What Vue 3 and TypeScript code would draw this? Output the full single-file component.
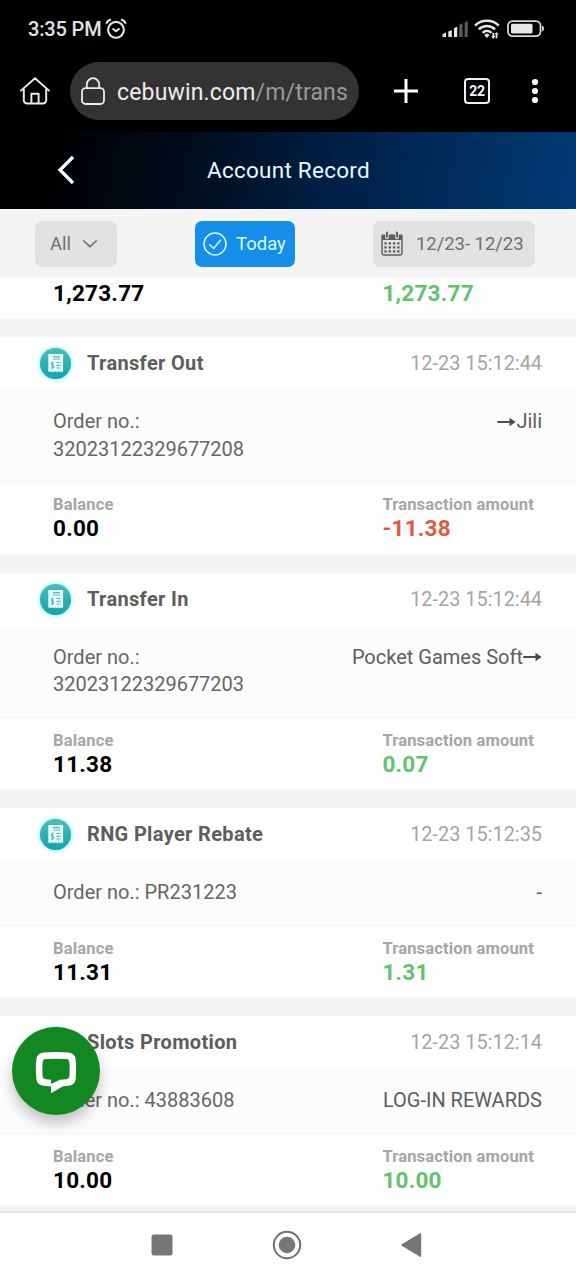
<script setup lang="ts">
interface AccountRecord {
  title: string
  time: string
  order: string[]
  note: string
  arrow?: 'before' | 'after'
  balance: string
  amount: string
}

const records: AccountRecord[] = [
  { title: 'Transfer Out', time: '12-23 15:12:44', order: ['Order no.:', '32023122329677208'], note: 'Jili', arrow: 'before', balance: '0.00', amount: '-11.38' },
  { title: 'Transfer In', time: '12-23 15:12:44', order: ['Order no.:', '32023122329677203'], note: 'Pocket Games Soft', arrow: 'after', balance: '11.38', amount: '0.07' },
  { title: 'RNG Player Rebate', time: '12-23 15:12:35', order: ['Order no.: PR231223'], note: '-', balance: '11.31', amount: '1.31' },
  { title: 'Slots Promotion', time: '12-23 15:12:14', order: ['Order no.: 43883608'], note: 'LOG-IN REWARDS', balance: '10.00', amount: '10.00' },
]
const dotColumns = [5.5, 9.8, 14.1, 18.4]
const dotRows = [11.5, 15.5, 19.5]
</script>

<template>
  <div class="screen">
    <div class="status">
      <span class="clock">3:35 PM</span>
      <svg class="alarm" width="22" height="22" viewBox="0 0 22 22" fill="none" stroke="#e2e2e2" stroke-width="2.1">
        <circle cx="11" cy="11.8" r="7.9" />
        <path d="M7.6 10.5 11 13.2l3.6-2.7" />
        <path d="M1.2 5.6C2 3.6 3.8 2.1 6 1.6M20.8 5.6C20 3.6 18.2 2.1 16 1.6" />
      </svg>
      <span class="spacer"></span>
      <svg class="signal" width="27" height="18" viewBox="0 0 27 18">
        <path d="M.5 14.2 4 12.5V17H.5zM6.3 11.5l3.5-1.6V17H6.3zM12 8.2l3.2-1.6V17H12z" fill="#e6e6e6" />
        <path d="m17.3 4.8 3.2-1.6V17h-3.2zM22.7 2.5l3-1.5v16h-3z" fill="#5c5c5c" />
      </svg>
      <svg class="wifi" width="26" height="20" viewBox="0 0 26 20" fill="none" stroke="#e6e6e6" stroke-width="2.4">
        <path d="M1 6.6C7.5.2 18.3.2 24.8 6.6M4.8 10.3c4.7-4.5 11.6-4.5 16.3 0M8.5 13.8c2.6-2.4 6.4-2.4 9 0" />
        <path d="m10.2 16 2.7-1.8 2.7 1.8-2.7 3z" fill="#e6e6e6" stroke="none" />
        <path d="M19.3 13.8v5M22.5 14.2v5" stroke-width="1.8" />
        <path d="m17.6 17 1.7 2.5 1.5-2.5M21 15.5l1.5-2 1.7 2" stroke-width="1" />
      </svg>
      <svg class="battery" width="38" height="18" viewBox="0 0 38 18">
        <rect x="1" y="1.1" width="32.5" height="15" rx="4.6" fill="none" stroke="#d8d8d8" stroke-width="1.8" />
        <rect x="4" y="3.8" width="21.5" height="9.7" rx="1.5" fill="#e6e6e6" />
        <path d="M35 5.8c2.6 0 2.6 5.6 0 5.6z" fill="#d8d8d8" />
      </svg>
    </div>

    <div class="browser">
      <svg class="home" width="32" height="30" viewBox="0 0 32 30" fill="none" stroke="#ededed" stroke-width="1.9" stroke-linecap="round" stroke-linejoin="round">
        <path d="M2 14.6 16 2.2l14 12.4M4.8 13v11.2a3.3 3.3 0 0 0 3.3 3.3h15.8a3.3 3.3 0 0 0 3.3-3.3V13M12.4 27.3v-9.6h7.2v9.6" />
      </svg>
      <div class="address">
        <svg width="26" height="30" viewBox="0 0 26 30" fill="none" stroke="#ededed" stroke-width="1.8">
          <rect x="2" y="12.2" width="22" height="15.8" rx="3.6" />
          <path d="M6.8 12V8.4a6.2 6.2 0 0 1 12.4 0V12" />
        </svg>
        <span class="url">cebuwin.com<span class="path">/m/trans</span></span>
      </div>
      <svg class="plus" width="26" height="26" viewBox="0 0 26 26" stroke="#fff" stroke-width="3">
        <path d="M1 13h24M13 1v24" />
      </svg>
      <div class="tabs">22</div>
      <svg class="more" width="8" height="26" viewBox="0 0 8 26" fill="#f4f4f4">
        <circle cx="4" cy="4" r="3.1" /><circle cx="4" cy="13" r="3.1" /><circle cx="4" cy="22" r="3.1" />
      </svg>
    </div>

    <header class="title-bar">
      <svg class="back" width="20" height="32" viewBox="0 0 20 32" fill="none" stroke="#fff" stroke-width="3.3">
        <path d="M17 3 4 16l13 13" />
      </svg>
      <h1>Account Record</h1>
    </header>

    <div class="filters">
      <button class="chip all">
        <span>All</span>
        <svg width="16" height="10" viewBox="0 0 16 10" fill="none" stroke="#6e6e6e" stroke-width="1.6"><path d="m1.2 1.5 6.8 6.2 6.8-6.2" /></svg>
      </button>
      <button class="chip today">
        <svg width="24" height="24" viewBox="0 0 24 24" fill="none" stroke="#d9fbff" stroke-width="1.5">
          <circle cx="12" cy="12" r="11" /><path d="m6.2 12.3 4.4 4.2 7.3-8.8" />
        </svg>
        <span>Today</span>
      </button>
      <button class="chip range">
        <svg width="22" height="25" viewBox="0 0 22 25">
          <path d="M2 4.2h18a1 1 0 0 1 1 1V22a2 2 0 0 1-2 2H3a2 2 0 0 1-2-2V5.2a1 1 0 0 1 1-1z" fill="none" stroke="#5d5d5d" stroke-width="1.4" />
          <path d="M1 4h20v5H1z" fill="#5d5d5d" />
          <path d="M6 1.5v5M16 1.5v5" stroke="#e2e2e2" stroke-width="3.6" stroke-linecap="round" />
          <path d="M6 1.5v4.2M16 1.5v4.2" stroke="#5d5d5d" stroke-width="1.9" stroke-linecap="round" />
          <template v-for="y in dotRows" :key="y">
            <rect v-for="x in dotColumns" :key="x" :x="x - 2.2" :y="y - .2" width="2.4" height="2.2" fill="#5d5d5d" />
          </template>
        </svg>
        <span>12/23- 12/23</span>
      </button>
    </div>

    <main class="records">
      <section class="partial">
        <strong class="value">1,273.77</strong>
        <strong class="value gain">1,273.77</strong>
      </section>

      <section v-for="record in records" :key="record.title" class="card">
        <div class="card-head">
          <svg class="receipt" width="39" height="39" viewBox="0 0 39 39">
            <defs>
              <linearGradient id="receipt-fill" x1="0" y1="0" x2="0" y2="1">
                <stop offset="0" stop-color="#4bbcba" /><stop offset="1" stop-color="#14a4b0" />
              </linearGradient>
            </defs>
            <circle cx="19.5" cy="19.5" r="15.5" fill="url(#receipt-fill)" />
            <path d="M12.3 10h14.8v18.2l-1.5-1-1.5 1-1.5-1-1.5 1-1.5-1-1.5 1-1.5-1-1.5 1-1.5-1-1.3 1z" fill="#e9fbfb" />
            <path d="M17 12.6h7M17 15h7M20.5 18.5h4M20.5 21.3h4M20.5 24h4" stroke="#55b9bd" stroke-width="1.2" />
            <path d="M17.9 18.8h-2.5v2.5h2.3v2.6H15M16.5 17.6v7.4" fill="none" stroke="#55b9bd" stroke-width="1" />
          </svg>
          <h2>{{ record.title }}</h2>
          <time>{{ record.time }}</time>
        </div>
        <div class="card-body">
          <div class="order"><div v-for="line in record.order" :key="line">{{ line }}</div></div>
          <div class="note" :class="record.arrow">
            <svg v-if="record.arrow" width="19" height="10" viewBox="0 0 19 10">
              <path d="M.3 3.9h12.2V.8L18.7 5l-6.2 4.200V6.100H.3z" fill="#4d4d4d" />
            </svg>
            <span>{{ record.note }}</span>
          </div>
        </div>
        <div class="card-foot">
          <div class="figure">
            <span class="label">Balance</span>
            <strong class="value">{{ record.balance }}</strong>
          </div>
          <div class="figure">
            <span class="label">Transaction amount</span>
            <strong class="value" :class="record.amount.startsWith('-') ? 'loss' : 'gain'">{{ record.amount }}</strong>
          </div>
        </div>
      </section>
    </main>

    <nav class="system-nav">
      <svg width="22" height="22" viewBox="0 0 22 22"><rect x=".5" y=".5" width="21" height="21" rx="2.5" fill="#777" /></svg>
      <svg width="30" height="30" viewBox="0 0 30 30">
        <circle cx="15" cy="15" r="13.2" fill="none" stroke="#707070" stroke-width="2" />
        <circle cx="15" cy="15" r="8.3" fill="#777" />
      </svg>
      <svg width="21" height="26" viewBox="0 0 21 26"><path d="M.8 12.2 19 1.2q1.2-.6 1.2.8v22q0 1.4-1.2.8L.8 13.8q-1-.8 0-1.6z" fill="#777" /></svg>
    </nav>

    <button class="chat" aria-label="Chat">
      <svg width="44" height="46" viewBox="0 0 44 46">
        <path d="M9.500 3.500Q22 2.500 34.500 3.500Q40.800 4.200 41.700 10Q42.600 20 41.700 30Q40.800 36 35 36.700L29 37.200L17 44.300V37.400L9.500 36.700Q3.200 36 2.300 30Q1.400 20 2.300 10Q3.200 4.200 9.500 3.500Z" fill="#fff" />
        <path d="M12 10Q22 9.300 32 10Q35 10.300 35.400 13Q36 20 35.400 27.500Q35 30 32 30.300L26 30.700L17 35V30.800L12 30.300Q9 30 8.600 27.500Q8 20 8.600 13Q9 10.300 12 10Z" fill="#138722" />
      </svg>
    </button>
  </div>
</template>

<style>
body { background: #f4f4f4; }
</style>

<style scoped>
* { box-sizing: border-box; }
.screen { position: relative; display: flex; flex-direction: column; width: 576px; height: 1280px; overflow: hidden; background: #f4f4f4; font-family: Roboto, "Liberation Sans", sans-serif; }
svg { display: block; flex: none; }
button { border: 0; font: inherit; }
h1, h2 { margin: 0; }
.status { display: flex; align-items: center; height: 58px; padding: 0 31px 0 28px; background: #000; flex: none; }
.clock { font-size: 20px; font-weight: 500; letter-spacing: -.15px; color: #e2e2e2; }
.alarm { margin-left: 3px; }
.spacer { flex: 1; }
.wifi { margin-left: 5px; }
.battery { margin-left: 7px; }
.browser { display: flex; align-items: center; height: 74px; padding: 0 37px 8px 19px; background: #000; flex: none; }
.address { display: flex; align-items: center; gap: 11px; width: 289px; height: 58px; margin-left: 19px; padding-left: 10px; border-radius: 29px; background: #333; }
.url { margin-top: 2px; font-size: 23px; letter-spacing: .16px; color: #ededed; white-space: nowrap; }
.path { color: #9a9a9a; }
.plus { margin-left: 34px; }
.tabs { display: flex; align-items: center; justify-content: center; width: 26px; height: 26px; margin-left: 45px; border: 2px solid #f0f0f0; border-radius: 4px; color: #f4f4f4; font-size: 14px; font-weight: 700; letter-spacing: -.4px; }
.more { margin-left: 41px; }
.title-bar { display: flex; align-items: center; height: 77px; padding-left: 56px; padding-bottom: 1px; background: linear-gradient(100deg, #000 8%, #000c1b 32%, #002149 60%, #003b75 100%); flex: none; }
.title-bar h1 { margin-left: 131px; color: #e6faff; font-size: 22.5px; font-weight: 400; letter-spacing: .25px; }
.filters { display: flex; align-items: center; height: 69px; padding: 0 41px 0 35px; background: #f4f4f4; flex: none; }
.chip { display: flex; align-items: center; height: 46px; padding: 0; border-radius: 7px; background: #e2e2e2; color: #6e6e6e; font-size: 18.5px; white-space: nowrap; }
.all { width: 82px; padding-left: 15px; gap: 11px; }
.today { width: 100px; margin-left: 78px; padding-left: 8px; gap: 9px; background: #158eea; color: #d9fbff; }
.range { width: 162px; margin-left: 78px; padding-left: 8px; gap: 13px; letter-spacing: -.05px; }
.records { display: flex; flex-direction: column; gap: 18.6px; height: 933px; overflow: hidden; }
.partial, .card-foot { display: grid; grid-template-columns: 329.4px 1fr; padding-left: 53px; background: #fdfdfd; }
.partial { height: 40.5px; padding-top: 1px; align-items: start; flex: none; }
.card { flex: none; }
.value { display: block; color: #000; font-size: 22.5px; line-height: 28px; font-weight: 700; letter-spacing: .24px; }
.gain { color: #62c370; }
.loss { color: #df5b42; }
.card-head { display: flex; align-items: center; height: 53px; padding: 0 34px 0 36px; background: #fff; }
.receipt { filter: drop-shadow(0 0 2px #62edf2); }
.card-head h2 { margin-left: 12px; color: #5d5d5d; font-size: 20px; line-height: 24px; padding-bottom: 1px; font-weight: 700; letter-spacing: .34px; }
time { margin-left: auto; color: #a5a5a5; font-size: 19.9px; }
.card-body { display: flex; justify-content: space-between; padding: 18px 34px 18px 53px; border-bottom: 1px solid #f3f3f3; background: #fcfcfc; color: #666; font-size: 20px; line-height: 27.5px; }
.note { display: flex; align-items: center; height: 27.5px; color: #5d5d5d; }
.note.after { flex-direction: row-reverse; }
.card-foot { height: 72px; padding-top: 14px; }
.label { display: block; color: #a6a6a6; font-size: 16.5px; line-height: 18px; font-weight: 700; letter-spacing: .17px; }
.system-nav { display: flex; align-items: center; justify-content: center; height: 69px; padding: 0 3px 3px 0; border-top: 2px solid #e4e4e4; background: #fefefe; gap: 99px; flex: none; }
.chat { position: absolute; left: 12px; top: 1027px; display: flex; align-items: center; justify-content: center; width: 88px; height: 88px; padding: 2px 0 0; border-radius: 50%; background: #138722; box-shadow: 0 8px 14px rgba(0, 0, 0, .23); }
</style>
